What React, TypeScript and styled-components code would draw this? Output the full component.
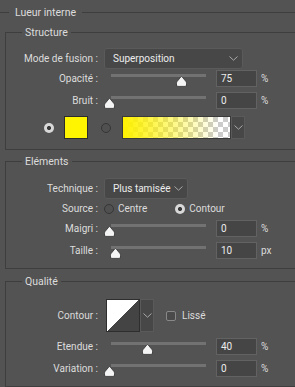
import React from "react";
import styled, { createGlobalStyle } from "styled-components";

const Global = createGlobalStyle`
  html, body { margin: 0; padding: 0; background: #535353; }
  * { box-sizing: border-box; }
`;

const LINE = "#3e3e3e";
const TEXT = "#dcdcdc";

const Panel = styled.div`
  width: 295px;
  height: 387px;
  overflow: hidden;
  background: #535353;
  color: ${TEXT};
  font-family: Roboto, "Liberation Sans", sans-serif;
  font-size: 10px;
  line-height: 14px;
  white-space: nowrap;
`;

const TitleRow = styled.div`
  display: flex;
  align-items: center;
  height: 25px;
`;

const Rule = styled.div<{ w?: number }>`
  height: 1px;
  background: ${LINE};
  ${({ w }) => (w ? `width: ${w}px;` : "flex: 1;")}
`;

const Title = styled.span`
  padding: 0 6px;
  font-size: 10.5px;
`;

const Group = styled.div<{ mt: number; pb: number }>`
  margin: ${({ mt }) => mt}px 0 0 5px;
  border-top: 1px solid ${LINE};
  border-left: 1px solid ${LINE};
  border-bottom: 1px solid ${LINE};
  padding-bottom: ${({ pb }) => pb}px;
`;

const Legend = styled.div<{ pt: number }>`
  margin-top: -8px;
  height: 15px;
  line-height: 15px;
  padding-left: 16px;
  margin-bottom: ${({ pt }) => pt}px;
  font-size: 10.5px;
  span {
    background: #535353;
    padding: 0 3px;
  }
`;

const Row = styled.div<{ mt?: number; h: number }>`
  display: flex;
  align-items: center;
  height: ${({ h }) => h}px;
  margin-top: ${({ mt }) => mt || 0}px;
`;

const Label = styled.div`
  width: 92px;
  margin-right: 6px;
  text-align: right;
`;

const Select = styled.div<{ w: number }>`
  width: ${({ w }) => w}px;
  height: 21px;
  display: flex;
  align-items: center;
  justify-content: space-between;
  padding: 0 4px 0 8px;
  background: #474747;
  border: 1px solid #5a5a5a;
  border-radius: 3px;
  color: #ececec;
`;

const Chevron = () => (
  <svg width="9" height="5" viewBox="0 0 9 5">
    <path d="M0.5 0.5 L4.5 4.2 L8.5 0.5" fill="none" stroke="#a8a8a8" strokeWidth="1" />
  </svg>
);

const SliderBox = styled.div`
  position: relative;
  width: 106px;
  height: 17px;
  margin-right: 6px;
`;

const Track = styled.div`
  margin: 4px 0 0 7px;
  width: 95px;
  height: 3px;
  background: #727272;
`;

const Thumb = styled.svg`
  position: absolute;
  top: 6px;
`;

const Slider = ({ value }: { value: number }) => (
  <SliderBox>
    <Track />
    <Thumb width="11" height="11" viewBox="0 0 11 11" style={{ left: Math.round(value * 96) }}>
      <path
        d="M5.5 0.6 Q5.9 0.6 6.3 1.1 L10 5.6 Q10.5 6.3 10.5 7.3 L10.5 9 Q10.5 10.4 9.2 10.4 L1.8 10.4 Q0.5 10.4 0.5 9 L0.5 7.3 Q0.5 6.3 1 5.6 L4.7 1.1 Q5.1 0.6 5.5 0.6 Z"
        fill="#f4f4f4"
        stroke="#2c2c2c"
        strokeWidth="0.8"
      />
    </Thumb>
  </SliderBox>
);

const NumField = styled.div`
  width: 41px;
  height: 17px;
  padding: 0 4px;
  display: flex;
  align-items: center;
  background: #454545;
  border: 1px solid #626262;
  color: #ececec;
`;

const Unit = styled.span`
  margin-left: 4px;
`;

const Radio = styled.span<{ on?: boolean }>`
  display: inline-block;
  width: 10px;
  height: 10px;
  border-radius: 50%;
  flex: none;
  ${({ on }) =>
    on
      ? `background: radial-gradient(circle, #3a3a3a 0 1.8px, #d8d8d8 2.3px);`
      : `border: 1px solid #363636; background: #505050;`}
`;

const Spacer = styled.span<{ w: number }>`
  width: ${({ w }) => w}px;
  flex: none;
`;

const Swatch = styled.div`
  width: 24px;
  height: 23px;
  background: #fff500;
  border: 1px solid #2c2c2c;
`;

const Gradient = styled.div`
  width: 109px;
  height: 23px;
  border: 1px solid #3a3a3a;
  background: linear-gradient(to right, #fff200, rgba(255, 242, 0, 0) 90%),
    repeating-conic-gradient(#ffffff 0 25%, #cbcbcb 0 50%) 0 0 / 10px 10px;
`;

const DropBtn = styled.div<{ h: number }>`
  width: 14px;
  height: ${({ h }) => h}px;
  display: flex;
  align-items: center;
  justify-content: center;
  background: #474747;
  border: 1px solid #5a5a5a;
`;

const ContourSwatch = styled.div`
  width: 34px;
  height: 33px;
  margin-left: 2px;
  border: 1px solid #2e2e2e;
  background: linear-gradient(to bottom right, #ffffff 50%, #444444 50%);
`;

const Check = styled.span`
  width: 10px;
  height: 10px;
  margin: 0 6px 0 12px;
  border: 1px solid #888;
  border-radius: 2px;
  background: #4a4a4a;
`;

const Choice = styled.span<{ gap: number }>`
  display: flex;
  align-items: center;
  gap: 4px;
  margin-right: ${({ gap }) => gap}px;
`;

const SliderRow = ({
  label,
  value,
  num,
  unit,
  mt,
}: {
  label: string;
  value: number;
  num: string;
  unit: string;
  mt: number;
}) => (
  <Row h={17} mt={mt}>
    <Label>{label}</Label>
    <Slider value={value} />
    <NumField>{num}</NumField>
    <Unit>{unit}</Unit>
  </Row>
);

export default function App() {
  return (
    <Panel>
      <Global />
      <TitleRow>
        <Rule w={9} />
        <Title>Lueur interne</Title>
        <Rule />
      </TitleRow>

      <Group mt={7} pb={10}>
        <Legend pt={8}>
          <span>Structure</span>
        </Legend>
        <Row h={21}>
          <Label>Mode de fusion :</Label>
          <Select w={139}>
            Superposition
            <Chevron />
          </Select>
        </Row>
        <SliderRow label="Opacité :" value={0.75} num="75" unit="%" mt={1} />
        <SliderRow label="Bruit :" value={0} num="0" unit="%" mt={5} />
        <Row h={23} mt={7}>
          <Spacer w={38} />
          <Radio on />
          <Spacer w={10} />
          <Swatch />
          <Spacer w={13} />
          <Radio />
          <Spacer w={11} />
          <Gradient />
          <DropBtn h={23}>
            <Chevron />
          </DropBtn>
        </Row>
      </Group>

      <Group mt={11} pb={9}>
        <Legend pt={9}>
          <span>Eléments</span>
        </Legend>
        <Row h={21}>
          <Label>Technique :</Label>
          <Select w={84}>
            Plus tamisée
            <Chevron />
          </Select>
        </Row>
        <Row h={18} mt={1}>
          <Label>Source :</Label>
          <Choice gap={28}>
            <Radio />
            Centre
          </Choice>
          <Choice gap={0}>
            <Radio on />
            Contour
          </Choice>
        </Row>
        <SliderRow label="Maigri :" value={0} num="0" unit="%" mt={2} />
        <SliderRow label="Taille :" value={0.06} num="10" unit="px" mt={5} />
      </Group>

      <Group mt={12} pb={9}>
        <Legend pt={10}>
          <span>Qualité</span>
        </Legend>
        <Row h={33}>
          <Label>Contour :</Label>
          <ContourSwatch />
          <DropBtn h={33}>
            <Chevron />
          </DropBtn>
          <Check />
          Lissé
        </Row>
        <SliderRow label="Etendue :" value={0.4} num="40" unit="%" mt={6} />
        <SliderRow label="Variation :" value={0} num="0" unit="%" mt={5} />
      </Group>
    </Panel>
  );
}
